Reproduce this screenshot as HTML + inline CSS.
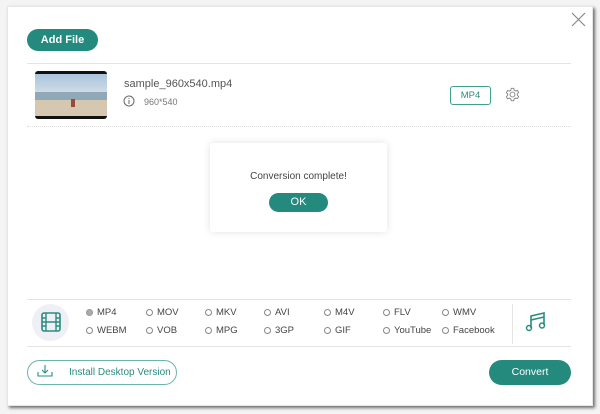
<!DOCTYPE html>
<html><head><style>
*{margin:0;padding:0;box-sizing:border-box}
body{width:600px;height:414px;background:#f4f4f4;font-family:"Liberation Sans",sans-serif;position:relative;overflow:hidden}
.win{position:absolute;left:7px;top:6px;width:586px;height:400px;background:#fff;box-shadow:2px 2px 3px rgba(0,0,0,.55);border:1px solid #e6e6e6}
.a{position:absolute}
.btn{position:absolute;background:#238a7d;color:#fff;border-radius:12px;text-align:center;font-size:11px;font-weight:bold}
.hl{position:absolute;height:1px;background:#e4e4e4}
.r{position:absolute;font-size:9.5px;color:#444}
.r i{position:absolute;left:-11px;top:2px;width:7px;height:7px;border:1px solid #888;border-radius:50%}
</style></head><body>
<div class="win"></div>
<svg class="a" style="left:571px;top:12px" width="15" height="15"><path d="M1 1L14 14M14 1L1 14" stroke="#888" stroke-width="1.2"/></svg>
<div class="btn" style="left:27px;top:29px;width:71px;height:22px;line-height:22px">Add File</div>
<div class="hl" style="left:27px;top:63px;width:544px"></div>
<div class="a" style="left:35px;top:71px;width:72px;height:48px;background:#111;border-radius:3px;overflow:hidden">
 <div class="a" style="left:0;top:3px;width:72px;height:18px;background:linear-gradient(#a9c4de,#cfdbe6)"></div>
 <div class="a" style="left:0;top:21px;width:72px;height:8px;background:#8fa9b8"></div>
 <div class="a" style="left:0;top:29px;width:72px;height:16px;background:#d6c8b0"></div>
 <div class="a" style="left:36px;top:28px;width:4px;height:8px;background:#9a4a3a"></div>
</div>
<div class="a" style="left:124px;top:78px;font-size:11px;color:#555">sample_960x540.mp4</div>
<svg class="a" style="left:123px;top:95px" width="12" height="12"><circle cx="6" cy="6" r="5" fill="none" stroke="#666"/><path d="M6 5v4M6 3v1" stroke="#666"/></svg>
<div class="a" style="left:144px;top:97px;font-size:9px;color:#777">960*540</div>
<div class="a" style="left:450px;top:86px;width:41px;height:19px;border:1px solid #40a090;border-radius:3px;color:#2a8c80;font-size:9.5px;text-align:center;line-height:17px">MP4</div>
<svg class="a" style="left:505px;top:87px" width="15" height="15" viewBox="0 0 24 24"><path d="M12 8a4 4 0 100 8 4 4 0 000-8zM10 2h4l.6 3 2.4 1.4 2.9-1 2 3.4-2.3 2v2.4l2.3 2-2 3.4-2.9-1-2.4 1.4-.6 3h-4l-.6-3L7 17.8l-2.9 1-2-3.4 2.3-2v-2.4l-2.3-2 2-3.4 2.9 1L9.4 5z" fill="none" stroke="#777" stroke-width="1.3"/></svg>
<div class="a" style="left:27px;top:126px;width:544px;border-top:1px dotted #ddd"></div>
<div class="a" style="left:210px;top:143px;width:177px;height:89px;background:#fff;border-radius:3px;box-shadow:0 0 8px rgba(0,0,0,.12)"></div>
<div class="a" style="left:210px;top:171px;width:177px;text-align:center;font-size:10px;color:#444">Conversion complete!</div>
<div class="btn" style="left:269px;top:193px;width:59px;height:19px;line-height:19px;font-weight:normal;border-radius:10px">OK</div>
<div class="hl" style="left:27px;top:299px;width:544px"></div>
<div class="hl" style="left:27px;top:346px;width:544px"></div>
<div class="a" style="left:32px;top:304px;width:37px;height:37px;border-radius:50%;background:#eef0f6"></div>
<svg class="a" style="left:41px;top:312px" width="20" height="20"><rect x="1" y="1" width="18" height="18" rx="2" fill="none" stroke="#2a8c80" stroke-width="1.6"/><path d="M5 1v18M15 1v18M1 6h4M1 10h4M1 14h4M15 6h4M15 10h4M15 14h4M5 10h10" stroke="#2a8c80" stroke-width="1.4"/></svg>
<div class="r" style="left:97px;top:307px"><i style="background:#aaa;border-color:#999"></i>MP4</div>
<div class="r" style="left:157px;top:307px"><i></i>MOV</div>
<div class="r" style="left:216px;top:307px"><i></i>MKV</div>
<div class="r" style="left:275px;top:307px"><i></i>AVI</div>
<div class="r" style="left:335px;top:307px"><i></i>M4V</div>
<div class="r" style="left:394px;top:307px"><i></i>FLV</div>
<div class="r" style="left:453px;top:307px"><i></i>WMV</div>
<div class="r" style="left:97px;top:325px"><i></i>WEBM</div>
<div class="r" style="left:157px;top:325px"><i></i>VOB</div>
<div class="r" style="left:216px;top:325px"><i></i>MPG</div>
<div class="r" style="left:275px;top:325px"><i></i>3GP</div>
<div class="r" style="left:335px;top:325px"><i></i>GIF</div>
<div class="r" style="left:394px;top:325px"><i></i>YouTube</div>
<div class="r" style="left:453px;top:325px"><i></i>Facebook</div>
<div class="a" style="left:512px;top:304px;width:1px;height:40px;background:#e4e4e4"></div>
<svg class="a" style="left:525px;top:311px" width="22" height="22"><path d="M6 17V5l13-3v12M6 9l13-3" fill="none" stroke="#2a8c80" stroke-width="1.6"/><circle cx="4" cy="17" r="2.5" fill="none" stroke="#2a8c80" stroke-width="1.5"/><circle cx="17" cy="14.5" r="2.5" fill="none" stroke="#2a8c80" stroke-width="1.5"/></svg>
<div class="a" style="left:27px;top:360px;width:150px;height:25px;border:1px solid #6bb5aa;border-radius:13px"></div>
<svg class="a" style="left:37px;top:364px" width="16" height="14"><path d="M8 1v8M5 6l3 3 3-3M1 8v4h14V8" fill="none" stroke="#2a8c80" stroke-width="1.1"/></svg>
<div class="a" style="left:69px;top:367px;font-size:10px;color:#2a8c80">Install Desktop Version</div>
<div class="btn" style="left:489px;top:360px;width:82px;height:25px;line-height:25px;font-weight:normal;font-size:10.5px;border-radius:13px">Convert</div>
</body></html>
